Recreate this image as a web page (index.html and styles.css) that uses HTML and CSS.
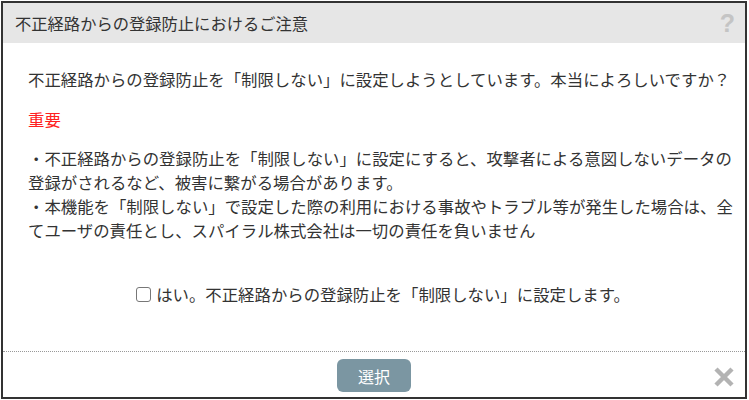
FILE: index.html
```html
<!DOCTYPE html>
<html lang="ja">
<head>
    <meta charset="UTF-8">
    <title>不正経路からの登録防止におけるご注意</title>
    <link rel="stylesheet" href="styles.css">
</head>
<body>
    <div class="dialog">
        <div class="dialog-header">
            <span class="dialog-title">不正経路からの登録防止におけるご注意</span>
            <span class="help">?</span>
        </div>
        <div class="dialog-body">
            <p class="lead">不正経路からの登録防止を「制限しない」に設定しようとしています。本当によろしいですか？</p>
            <p class="important">重要</p>
            <p class="notes">・不正経路からの登録防止を「制限しない」に設定にすると、攻撃者による意図しないデータの登録がされるなど、被害に繋がる場合があります。<br>・本機能を「制限しない」で設定した際の利用における事故やトラブル等が発生した場合は、全てユーザの責任とし、スパイラル株式会社は一切の責任を負いません</p>
            <label class="confirm">
                <span class="checkbox"></span>はい。不正経路からの登録防止を「制限しない」に設定します。
            </label>
        </div>
        <div class="dialog-footer">
            <button type="button" class="btn-select">選択</button>
            <span class="close">
                <svg width="22" height="22" viewBox="0 0 22 22">
                    <path d="M3 3 L19 19 M19 3 L3 19" stroke="#b3b3b3" stroke-width="4.5"/>
                </svg>
            </span>
        </div>
    </div>
</body>
</html>
```

FILE: styles.css
```css
body {
    margin: 0;
    background: #fff;
    font-family: "Noto Sans CJK JP", "Noto Sans", sans-serif;
    color: #333;
}

.dialog {
    width: 746px;
    height: 398px;
    margin: 1px 0 0 1px;
    border: 2px solid #333;
    box-sizing: border-box;
    display: flex;
    flex-direction: column;
}

.dialog-header {
    height: 40px;
    background: #e6e6e6;
    display: flex;
    align-items: center;
    justify-content: space-between;
    padding: 0 10px 0 12px;
}

.dialog-title {
    font-size: 16.3px;
    line-height: 24px;
}

.help {
    font-family: "Liberation Sans", sans-serif;
    font-size: 25px;
    font-weight: bold;
    color: #c4c4c4;
    line-height: 24px;
}

.dialog-body {
    height: 308px;
    padding: 24px 7px 0 25px;
    box-sizing: border-box;
    font-size: 16.4px;
    line-height: 24px;
}

.dialog-body p {
    margin: 0;
}

.important {
    color: #ff2020;
    margin-top: 16px !important;
}

.notes {
    margin-top: 15px !important;
}

.confirm {
    display: flex;
    align-items: center;
    justify-content: center;
    margin-top: 40px;
}

.checkbox {
    width: 15px;
    height: 15px;
    border: 1.5px solid #777;
    border-radius: 3px;
    box-sizing: border-box;
    margin-right: 5px;
}

.dialog-footer {
    flex: 1;
    border-top: 1px dotted #999;
    display: flex;
    align-items: center;
    justify-content: center;
    position: relative;
}

.btn-select {
    width: 74px;
    height: 33px;
    margin-top: 2px;
    background: #7b96a2;
    color: #fff;
    border: none;
    border-radius: 6px;
    font-family: "Noto Sans CJK JP", sans-serif;
    font-size: 16px;
}

.close {
    position: absolute;
    right: 10px;
    top: 14px;
    line-height: 0;
}
```
